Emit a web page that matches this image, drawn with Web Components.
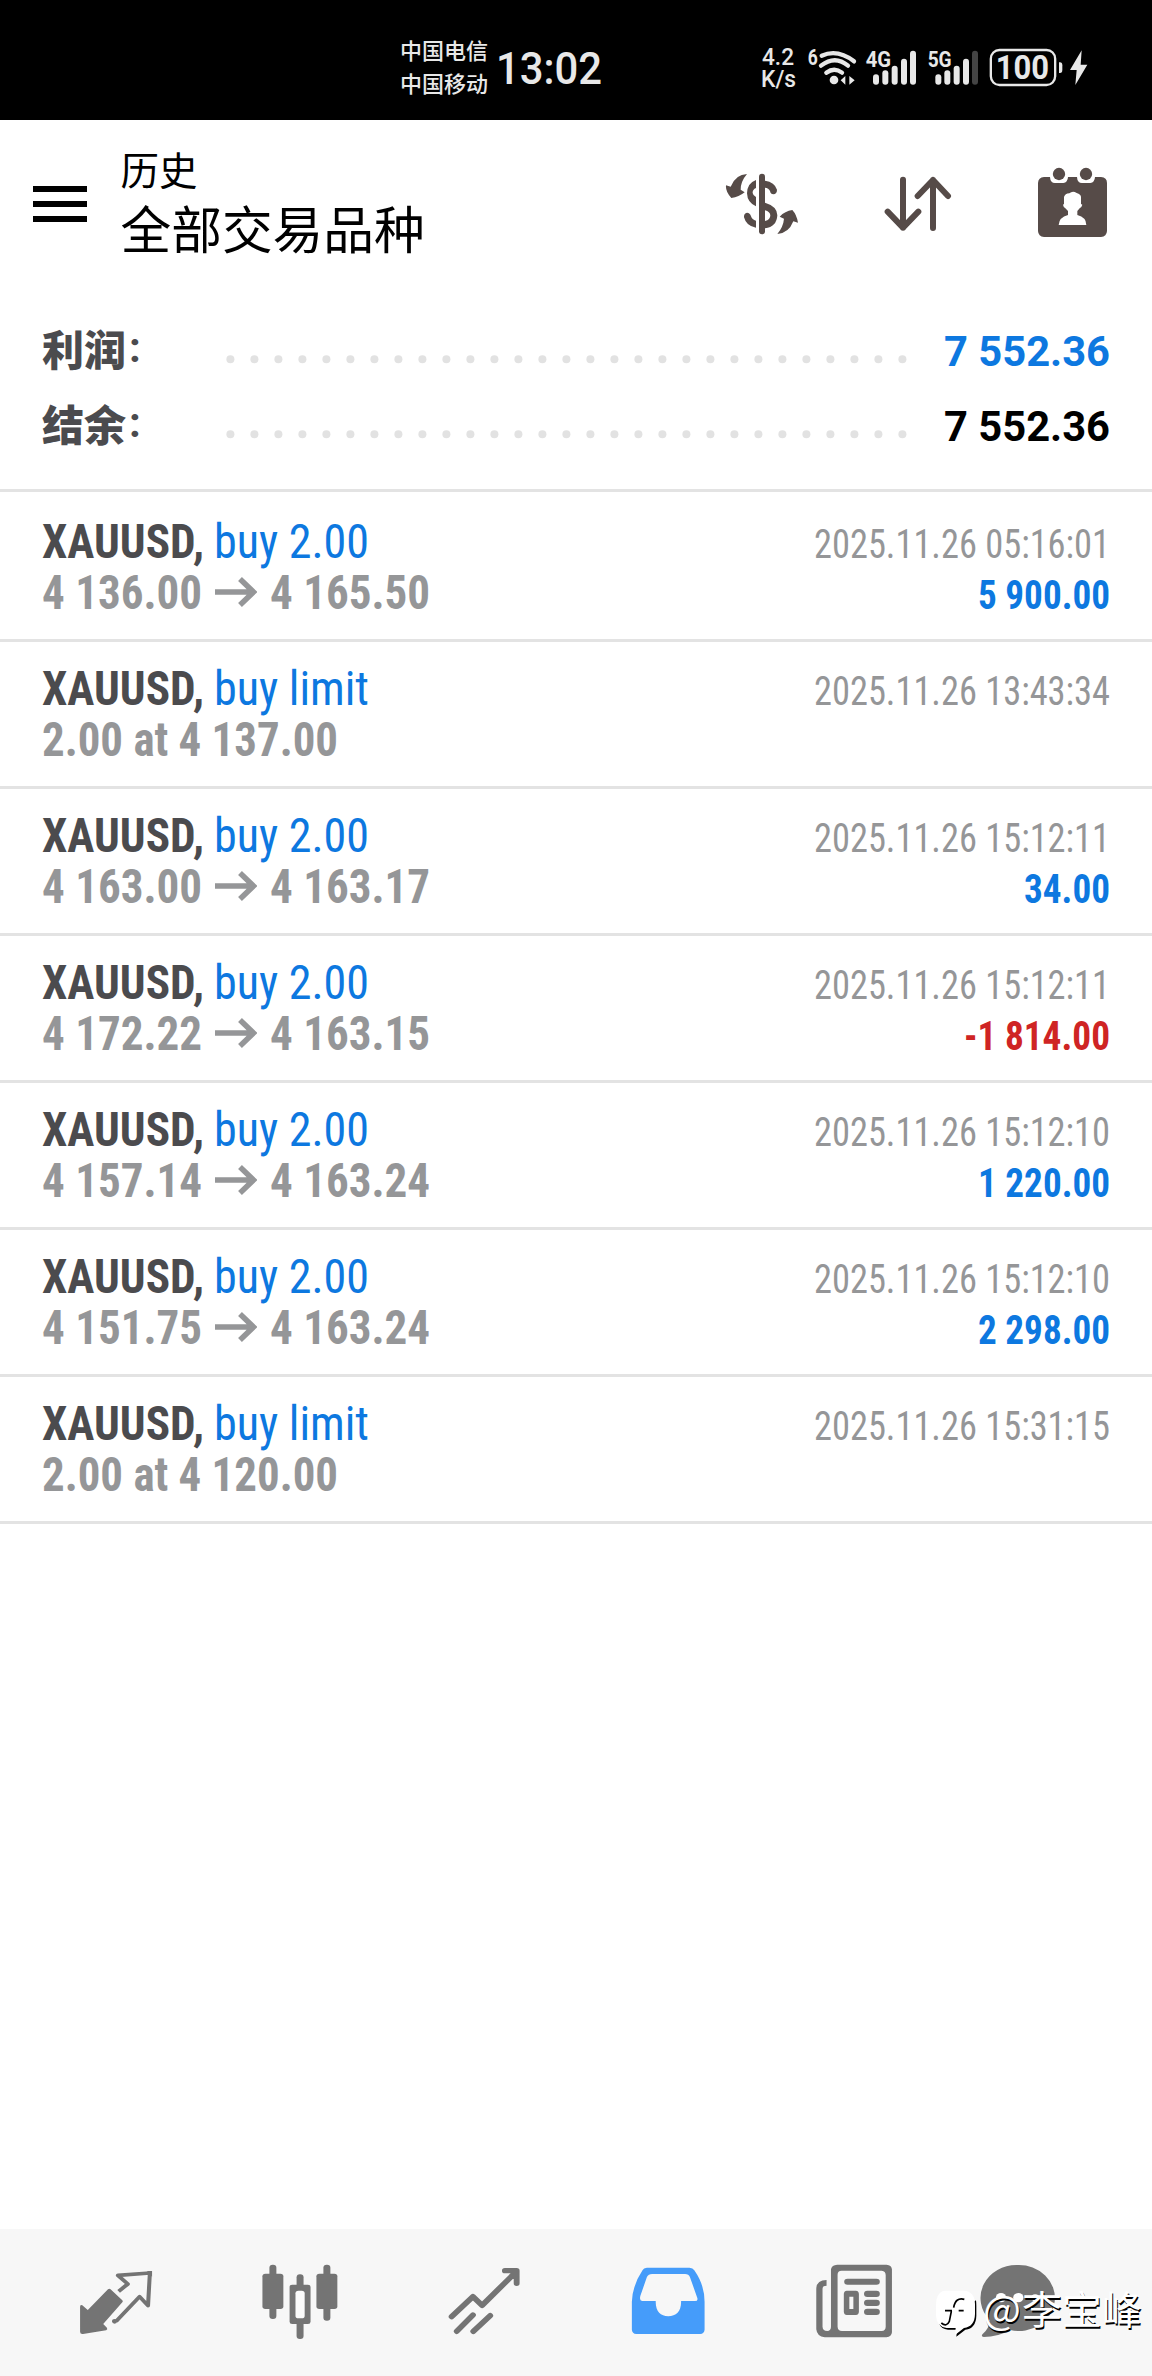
<!DOCTYPE html>
<html lang="zh-CN">
<head>
<meta charset="utf-8">
<title>历史</title>
<style>
html,body{margin:0;padding:0;background:#fff}
body{font-family:Roboto,"Noto Sans CJK SC",sans-serif;width:1152px;height:2376px;overflow:hidden}
</style>
</head>
<body>
<history-app></history-app>
<script>
const define=(name,html,setup)=>customElements.define(name,class extends HTMLElement{
  connectedCallback(){
    if(this.shadowRoot)return;
    this.attachShadow({mode:'open'}).innerHTML=typeof html==='function'?html(this):html;
    if(setup)setup(this);
  }
});

/* Text squeezed or stretched horizontally to the width given in "w". */
define('fit-text',e=>`<style>
:host{display:block;flex:none;width:${e.getAttribute('w')}px;white-space:nowrap}
span{display:inline-block;transform-origin:0 50%}
</style><span><slot></slot></span>`,e=>{
  const s=e.shadowRoot.querySelector('span');
  s.style.transform=`scaleX(${+e.getAttribute('w')/s.getBoundingClientRect().width})`;
});

define('status-bar',`<style>
:host{display:flex;height:120px;background:#000;color:#e8e8e8;box-sizing:border-box;padding-left:400px;align-items:flex-start}
.carrier{width:90px;padding-top:33px;font:500 22px/33px "Noto Sans CJK SC",sans-serif}
.time{margin:39px 0 0 6px;width:108px;font:500 45px/60px Roboto,sans-serif}
.speed{width:45px;margin:47px 0 0 157px;font:500 23px/21.5px Roboto,sans-serif}
.speed fit-text:first-of-type{margin-left:1px}
.icons{display:flex;margin-top:47px}
svg{display:block;height:42px;overflow:visible}
text{font-family:Roboto,sans-serif;font-weight:700;fill:#e8e8e8}
</style>
<div class="carrier"><fit-text w="88">中国电信</fit-text><fit-text w="88">中国移动</fit-text></div>
<div class="time"><fit-text w="106">13:02</fit-text></div>
<div class="speed"><fit-text w="32">4.2</fit-text><fit-text w="35">K/s</fit-text></div>
<div class="icons">
<svg width="55" viewBox="198 81 165 126"><text x="203" y="136" font-size="64" textLength="30" lengthAdjust="spacingAndGlyphs">6</text>
<g fill="none" stroke="#e8e8e8" stroke-width="13" stroke-linecap="round"><path d="M245 107Q293 86 342 124"/><path d="M243 137Q285 104 324 137"/><path d="M259 158Q283 140 306 158"/></g><circle cx="282" cy="180" r="13" fill="#e8e8e8"/><path d="M302 181L316 168V194ZM328 168L344 181L328 194Z" fill="#e8e8e8"/></svg>
<svg width="62" viewBox="363 81 186 126"><text x="377" y="140" font-size="64" textLength="76" lengthAdjust="spacingAndGlyphs">4G</text><g fill="#e8e8e8"><rect x="399" y="163" width="18" height="31" rx="9"/><rect x="427" y="151" width="18" height="43" rx="9"/><rect x="455" y="137" width="18" height="57" rx="9"/><rect x="483" y="116" width="18" height="78" rx="9"/><rect x="510" y="92" width="18" height="102" rx="9"/></g></svg>
<svg width="62" viewBox="549 81 186 126"><text x="563" y="140" font-size="64" textLength="72" lengthAdjust="spacingAndGlyphs">5G</text><g fill="#e8e8e8"><rect x="586" y="163" width="18" height="31" rx="9"/><rect x="613" y="151" width="18" height="43" rx="9"/><rect x="641" y="137" width="18" height="57" rx="9"/><rect x="669" y="116" width="18" height="78" rx="9"/><rect x="696" y="92" width="18" height="102" rx="9" fill="#444"/></g></svg>
<svg width="105" viewBox="735 81 315 126"><rect x="752.500" y="90" width="193" height="105" rx="26" fill="none" stroke="#e8e8e8" stroke-width="7"/><text x="767" y="178" font-size="98" textLength="160" lengthAdjust="spacingAndGlyphs">100</text><path d="M957 127h3a7 9 0 0 1 7 9v14a7 9 0 0 1-7 9h-3z" fill="#e8e8e8"/><path d="M1025 91L990 150H1010L1006 195L1042 134H1022Z" fill="#e8e8e8"/></svg>
</div>`);

define('app-header',`<style>
:host{display:flex;height:194px;color:#000;box-sizing:border-box;padding:0 44px 0 33px}
.menu{display:block;margin-top:66px}
.titles{margin:20px auto 0 33px;font-family:"Noto Sans CJK SC",sans-serif}
.t1{font-size:38.5px;line-height:56px;padding-left:.5px}.t2{font-size:50.7px;line-height:63px;white-space:nowrap;padding-left:.5px}
.actions{display:flex;gap:85px;margin-top:47px}
.actions svg{display:block;height:73px}
</style>
<svg class="menu" width="54" height="36"><path d="M0 0h54v6H0zM0 15h54v6H0zM0 30h54v6H0z"/></svg>
<div class="titles"><div class="t1">历史</div><div class="t2">全部交易品种</div></div>
<div class="actions">
<svg width="74" viewBox="75 81 222 219" fill="#564b48"><rect x="177" y="101" width="18" height="182" rx="9"/>
<path d="M168 120V144Q157 149 158 159Q159 167 168 171V199Q142 188 141 160Q142 129 168 120ZM195 122Q224 126 231 149Q231 162 220 163Q212 163 210 153Q206 144 195 143ZM195 188Q232 199 232 226Q230 261 195 265V243Q211 240 211 226Q210 215 195 211ZM168 263Q139 259 132 232Q131 220 141 218Q150 218 153 229Q156 239 168 242Z"/>
<path d="M141 102Q107 103 92 140L78 136Q76 155 94 174Q117 171 134 157L122 149Q122 124 141 102ZM232 282Q266 280 280 244L294 248Q290 224 277 210Q255 213 239 230L252 236Q250 260 232 282Z"/></svg>
<svg width="68" viewBox="552 81 204 219"><g fill="none" stroke="#564b48" stroke-width="18" stroke-linecap="round" stroke-linejoin="round"><path d="M609 119V263M563 215L609 263L655 215M699 264V120M653 168L699 120L744 168"/></g></svg>
<svg width="71" viewBox="1011 81 213 219"><path fill="#564b48" d="M1032 111H1050Q1051 129 1065 129H1090Q1103 128 1104 111H1131Q1132 129 1146 129H1171Q1184 128 1185 111H1203Q1221 112 1221 129V273Q1220 290 1203 291H1032Q1015 290 1014 273V129Q1015 112 1032 111Z"/><circle cx="1077" cy="102" r="18.5" fill="#564b48"/><circle cx="1158" cy="102" r="18.5" fill="#564b48"/><path fill="#fff" d="M1092 171Q1095 161 1108 160Q1118 151 1130 159Q1143 163 1143 171V192L1147 194Q1145 202 1139 205L1132 213V225Q1159 232 1159 255H1076Q1077 232 1104 225V213L1096 205Q1090 201 1089 194L1092 192Z"/></svg>
</div>`);

define('summary-row',e=>`<style>
:host{display:flex;height:75px;align-items:baseline;padding:0 42px;font:700 42px/75px Roboto,sans-serif;color:${e.getAttribute('color')}}
.label{width:184px;color:#4b4b4e;font:700 42px/60px Roboto,"Noto Sans CJK SC",sans-serif;display:flex}
.label b{font-family:"Noto Sans CJK SC",sans-serif;padding-right:3px}
.value{margin-left:auto}
</style><div class="label"><b>${e.getAttribute('label')}</b><span>:</span></div>
<svg width="684" height="11" fill="#e2e2e2">${Array.from({length:29},(_,i)=>`<circle cx="${4.4+i*24}" cy="4.3" r="4"/>`).join('')}</svg>
<fit-text class="value" w="166"><slot></slot></fit-text>`);

define('deal-row',e=>{
  const a=n=>e.getAttribute(n);
  return `<style>
:host{display:block;border-bottom:3px solid #e3e3e3;padding:21px 42px 0;box-sizing:content-box;height:123px;font-family:"Roboto Condensed",Roboto,sans-serif;font-stretch:75%}
.line{display:flex;align-items:baseline;height:51px;font-size:48px;line-height:51px;color:#959698;font-weight:700}
.sym{color:#4b4b4e;margin-right:10px}
.side{color:#0d78e0;font-weight:400}
.date{margin-left:auto;font-size:40px;font-weight:400}
.pl{margin-left:auto;font-size:40px;color:${a('loss')!==null?'#cf2424':'#0d78e0'}}
svg{margin:9.500px 13px 0;align-self:flex-start}
</style>
<div class="line"><fit-text class="sym" w="162">XAUUSD,</fit-text><fit-text class="side" w="155">${a('side')}</fit-text><fit-text class="date" w="296">2025.11.26 ${a('time')}</fit-text></div>
<div class="line">${a('to')?`<fit-text w="160">${a('from')}</fit-text><svg width="42" height="30" fill="none" stroke="#959698" stroke-width="5.5"><path d="M0 15H39M25 2L38.500 15L25 28"/></svg><fit-text w="160">${a('to')}</fit-text>`:`<fit-text w="296">${a('from')}</fit-text>`}${a('pl')?`<fit-text class="pl" w="${a('plw')||132}">${a('pl')}</fit-text>`:''}</div>`;
});

define('tab-bar',`<style>
:host{display:flex;position:relative;height:147px;background:#f7f7f7;box-sizing:border-box;padding:31px 0 0 76px}
svg{display:block;width:80px;height:83px;margin-right:104px;fill:#747474;flex:none}
.news{margin-right:84px}
.chat{margin:0}
/* signature lying over the chat tab */
.mark{position:absolute;left:936px;top:52px;display:flex;align-items:flex-start;color:#fff;font:400 39px/52px "Noto Sans CJK SC",sans-serif;text-shadow:1px 1.500px 0 #000}
.mark svg{width:44px;height:50px;margin:9px 3px 0 0;overflow:visible}
.at{margin-right:1px}
</style>
<svg viewBox="206.900 150 217.800 249" preserveAspectRatio="none"><path d="M294 238Q298 235 301 238L333 271Q336 274 333 277L281 342L291 353Q294 358 289 361L226 372Q218 373 218 365V291Q218 282 224 286L239 300Z"/><path fill="none" stroke="#747474" stroke-width="11" stroke-linejoin="round" stroke-linecap="butt" d="M323 244L348 222L321 196L408 189L403 287L380 260L316 334"/><circle cx="312" cy="334" r="7"/><path d="M400 183H414V200Z"/></svg>
<svg viewBox="706.400 150 217.800 249" preserveAspectRatio="none"><rect x="713" y="191" width="57" height="106" rx="8"/><rect x="732" y="164" width="19" height="163" rx="9"/><rect x="860" y="191" width="57" height="106" rx="8"/><rect x="879" y="164" width="19" height="168" rx="9"/><rect x="787" y="224" width="57" height="118" rx="7"/><rect x="806" y="193" width="19" height="194" rx="9"/><rect x="803" y="242" width="25" height="83" rx="8" fill="#fafafa"/></svg>
<svg viewBox="1207.200 150 217.800 249" preserveAspectRatio="none"><g fill="none" stroke="#747474" stroke-width="16" stroke-linecap="round" stroke-linejoin="round"><path d="M1228 320L1286 260L1311 286L1403 186M1373 182H1405V220"/><path d="M1242 364L1286 315M1287 364L1333 317"/></g></svg>
<svg style="margin-right:106px" viewBox="141.500 150 217.800 249" preserveAspectRatio="none"><path fill="#459cfa" fill-rule="evenodd" d="M193 173H309Q318 174 322 181Q350 225 350 275V359Q349 371 338 372H164Q153 371 152 359V275Q154 225 181 181Q184 174 193 173ZM207 192Q197 192 193 201L175 258Q172 273 180 273H217C216 304 230 318 251 319C273 318 287 304 286 273H324Q333 273 330 263L310 201Q307 192 297 192Z"/></svg>
<svg class="news" viewBox="647.800 150 217.800 249" preserveAspectRatio="none"><path fill-rule="evenodd" d="M711 164H845Q859 165 860 178V367Q859 381 845 382H677Q656 380 654 358V236Q655 210 682 210V227Q671 227 671 236V350Q672 363 684 363Q694 362 694 350V178Q696 165 711 164ZM723 182Q712 182 712 194V350Q713 363 724 363H832Q843 362 843 350V196Q843 183 832 182Z"/><rect x="730" y="206" width="97" height="18" rx="9"/><rect x="784" y="242" width="43" height="19" rx="9"/><rect x="784" y="269" width="43" height="19" rx="9"/><rect x="784" y="296" width="43" height="19" rx="9"/><path fill-rule="evenodd" d="M737 242H762Q769 242 770 251V306Q769 315 762 315H737Q730 315 729 306V251Q730 242 737 242ZM744 260V297H755V260Z"/></svg>
<svg class="chat" viewBox="1094.300 150 217.800 249" preserveAspectRatio="none"><path d="M1202 165A98 99 0 1 1 1182 360Q1148 381 1110 381Q1100 379 1109 370Q1124 356 1127 331A98 99 0 0 1 1202 165Z"/><g fill="#fff"><circle cx="1157" cy="263" r="14"/><circle cx="1204" cy="263" r="14"/><circle cx="1250" cy="263" r="10"/></g></svg>
<div class="mark"><svg viewBox="20 94 132 150"><path transform="translate(4 5)" fill="#000" d="M136 120Q137 128 137 136V166Q136 204 104 208L77 229L79 208H52Q32 206 26 192Z"/><path fill="#fff" d="M48 96H104Q136 98 137 136V166Q136 204 104 208L77 229L79 208H52Q22 204 20 172V136Q22 98 48 96Z"/><path fill="none" stroke="#000" stroke-width="5" d="M105 122Q78 115 73 147M66 158L60 188Q52 206 36 193M47 156H68M88 156H103"/></svg><fit-text class="at" w="38">@</fit-text><fit-text w="120">李宝峰</fit-text></div>`);

define('history-app',`<style>
:host{display:flex;flex-direction:column;width:1152px;height:2376px;background:#fff}
.summary{border-bottom:3px solid #e3e3e3;padding-bottom:25px}
.deals{flex:1;padding-top:3px}
</style>
<status-bar></status-bar><app-header></app-header>
<div class="summary"><summary-row label="利润" color="#0d78e0">7 552.36</summary-row><summary-row label="结余" color="#000">7 552.36</summary-row></div>
<div class="deals">
<deal-row side="buy 2.00" time="05:16:01" from="4 136.00" to="4 165.50" pl="5 900.00"></deal-row>
<deal-row side="buy limit" time="13:43:34" from="2.00 at 4 137.00"></deal-row>
<deal-row side="buy 2.00" time="15:12:11" from="4 163.00" to="4 163.17" pl="34.00" plw="86"></deal-row>
<deal-row side="buy 2.00" time="15:12:11" from="4 172.22" to="4 163.15" pl="-1 814.00" plw="146" loss></deal-row>
<deal-row side="buy 2.00" time="15:12:10" from="4 157.14" to="4 163.24" pl="1 220.00"></deal-row>
<deal-row side="buy 2.00" time="15:12:10" from="4 151.75" to="4 163.24" pl="2 298.00"></deal-row>
<deal-row side="buy limit" time="15:31:15" from="2.00 at 4 120.00"></deal-row>
</div>
<tab-bar></tab-bar>`);
</script>
</body>
</html>
